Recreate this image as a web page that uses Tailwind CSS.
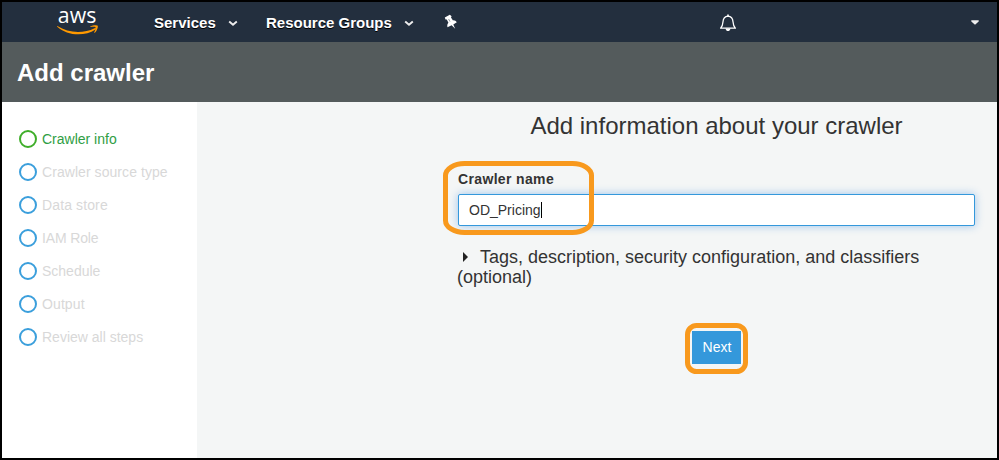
<!DOCTYPE html>
<html lang="en">
<head>
<meta charset="utf-8">
<title>Add crawler</title>
<script src="https://cdn.jsdelivr.net/npm/@tailwindcss/browser@4"></script>
</head>
<body class="font-['Liberation_Sans',Arial,sans-serif] text-[#333]">
<div class="w-[999px] h-[460px] border-2 border-black flex flex-col overflow-hidden bg-[#f4f6f6]">
  <header class="h-10 shrink-0 bg-[#232f3e] flex items-center text-[15px] font-bold text-white">
    <svg class="ml-[54px] w-[44px] h-[40px] shrink-0 overflow-visible" viewBox="0 0 44 40">
      <text x="1.8" y="20.6" font-family="Open Sans, sans-serif" font-size="22.5" font-weight="500" fill="#fff" textLength="38.5" lengthAdjust="spacingAndGlyphs">aws</text>
      <path d="M1.4 24.1C12 31 27 32 38.6 26.2C39.8 25.7 40.5 26.7 39.5 27.5C28 35 11 33.5 1.2 24.7C.9 24.3 1.1 24 1.4 24.1Z" fill="#f90"/>
      <path d="M34.3 24.6C37 22.8 41.2 23 41.7 23.7C42.2 24.5 41.3 28.6 38.8 30.7C38.3 31 38 30.8 38.2 30.3C39 28.6 40 25.8 39.5 25.2C39 24.6 36.2 24.9 34.7 25.1C34.2 25.1 34 24.9 34.3 24.6Z" fill="#f90"/>
    </svg>
    <span class="ml-[54px] w-[62px] pt-0.5 whitespace-nowrap [text-shadow:0_1px_0_#000]">Services</span>
    <svg class="ml-3 mt-0.5 w-[10px] h-[7px]" viewBox="0 0 10 7"><path d="M1.2 1.5L5 4.7L8.8 1.5" fill="none" stroke="#eee" stroke-width="1.9"/></svg>
    <span class="ml-7 w-[126px] pt-0.5 whitespace-nowrap [text-shadow:0_1px_0_#000]">Resource Groups</span>
    <svg class="ml-3 mt-0.5 w-[10px] h-[7px]" viewBox="0 0 10 7"><path d="M1.2 1.5L5 4.7L8.8 1.5" fill="none" stroke="#eee" stroke-width="1.9"/></svg>
    <svg class="ml-[30px] w-[14px] h-[16px]" viewBox="0 0 14 16"><path d="M.8 3.4L5.8 .8L7.6 2.2L7 3.4L9 6.4C10.6 6.2 12 7 12.8 8.3L9.3 10.4L11.2 14.8L7.6 11.3L3.5 13.2C3 11.5 3.3 9.9 4.4 8.8L2.8 5.4L1.5 5.4Z" fill="#fff"/><path d="M4.6 5L6 7.6" stroke="#8d949c" stroke-width=".9"/></svg>
    <svg class="ml-[261px] mt-0.5 w-[18px] h-[18px]" viewBox="0 0 18 18"><path d="M1.6 14.2C3.5 12.5 3.8 10.8 4 7.8C4.2 4.3 5.5 2.3 9 2.1C12.5 2.3 13.8 4.3 14 7.8C14.2 10.8 14.5 12.5 16.4 14.2Z" fill="none" stroke="#fff" stroke-width="1.3" stroke-linejoin="round"/><path d="M8.2 .6H9.8V2.4H8.2ZM6.5 14.5H11.5C11 16.5 10.2 17 9 17S7 16.5 6.5 14.5Z" fill="#fff"/></svg>
    <svg class="ml-auto mr-[18px] mt-px w-[8px] h-[5px]" viewBox="0 0 8 5"><path d="M.3 .2H7.7V1.5L4 4.8L.3 1.5Z" fill="#eee"/></svg>
  </header>
  <div class="h-[60px] shrink-0 bg-[#545b5c] flex items-center pl-[15px] pt-px text-2xl font-bold text-white">Add crawler</div>
  <div class="flex flex-1 min-h-0">
    <nav class="w-[195px] shrink-0 bg-white pt-[21px] pl-[17px] text-[14px] text-[#d8d8d8]">
      <ul>
        <li class="h-[33px] flex items-center gap-[5px] text-[#2f9e44]"><span class="w-[18px] h-[18px] mb-px rounded-full border-2 border-[#3fae2a]"></span>Crawler info</li>
        <li class="h-[33px] flex items-center gap-[5px] tracking-[0.06px]"><span class="w-[18px] h-[18px] mb-px rounded-full border-2 border-[#3b9fdc]"></span>Crawler source type</li>
        <li class="h-[33px] flex items-center gap-[5px] tracking-[0.12px]"><span class="w-[18px] h-[18px] mb-px rounded-full border-2 border-[#3b9fdc]"></span>Data store</li>
        <li class="h-[33px] flex items-center gap-[5px] -tracking-[0.15px]"><span class="w-[18px] h-[18px] mb-px rounded-full border-2 border-[#3b9fdc]"></span>IAM Role</li>
        <li class="h-[33px] flex items-center gap-[5px]"><span class="w-[18px] h-[18px] mb-px rounded-full border-2 border-[#3b9fdc]"></span>Schedule</li>
        <li class="h-[33px] flex items-center gap-[5px] tracking-[0.1px]"><span class="w-[18px] h-[18px] mb-px rounded-full border-2 border-[#3b9fdc]"></span>Output</li>
        <li class="h-[33px] flex items-center gap-[5px]"><span class="w-[18px] h-[18px] mb-px rounded-full border-2 border-[#3b9fdc]"></span>Review all steps</li>
      </ul>
    </nav>
    <main class="flex-1 pl-[260px] pr-[22px] pt-[11px]">
      <h1 class="pl-px text-2xl leading-[26px] text-center whitespace-nowrap">Add information about your crawler</h1>
      <div class="relative mt-[30px] pl-px">
        <label for="name" class="block text-[14px] leading-5 font-bold tracking-[0.35px]">Crawler name</label>
        <div id="name" class="mt-[5px] h-8 w-[517px] bg-white border border-[#3498db] rounded-[2px] shadow-[0_0_8px_rgba(52,132,219,0.45)] flex items-center pl-[10px] text-[14px]">OD_Pricing<span class="w-px h-[16px] bg-black"></span></div>
        <div class="absolute left-[-14px] top-[-8px] w-[151px] h-[74px]">
          <svg class="block w-full h-full" viewBox="0 0 151 74"><rect x="2.5" y="2.5" width="146" height="69" rx="19" ry="12" fill="none" stroke="#f8991d" stroke-width="5"/></svg>
        </div>
      </div>
      <p class="mt-[21px] text-[18px] leading-5"><svg class="inline-block ml-[6px] mr-[12px] w-[5px] h-[10px] align-[1px]" viewBox="0 0 5 10"><path d="M0 0L5 5L0 10Z" fill="#222"/></svg>Tags, description, security configuration, and classifiers (optional)</p>
      <div class="mt-[36px] ml-[228px] w-[63px] h-[51px] relative flex items-start justify-center pt-2">
        <button class="w-[49px] h-[33px] bg-[#3498db] text-white text-[14px] pl-px">Next</button>
        <svg class="absolute inset-0 w-full h-full" viewBox="0 0 63 51"><rect x="2.5" y="2.5" width="58" height="46" rx="9" ry="9" fill="none" stroke="#f8991d" stroke-width="5"/></svg>
      </div>
    </main>
  </div>
</div>
</body>
</html>
